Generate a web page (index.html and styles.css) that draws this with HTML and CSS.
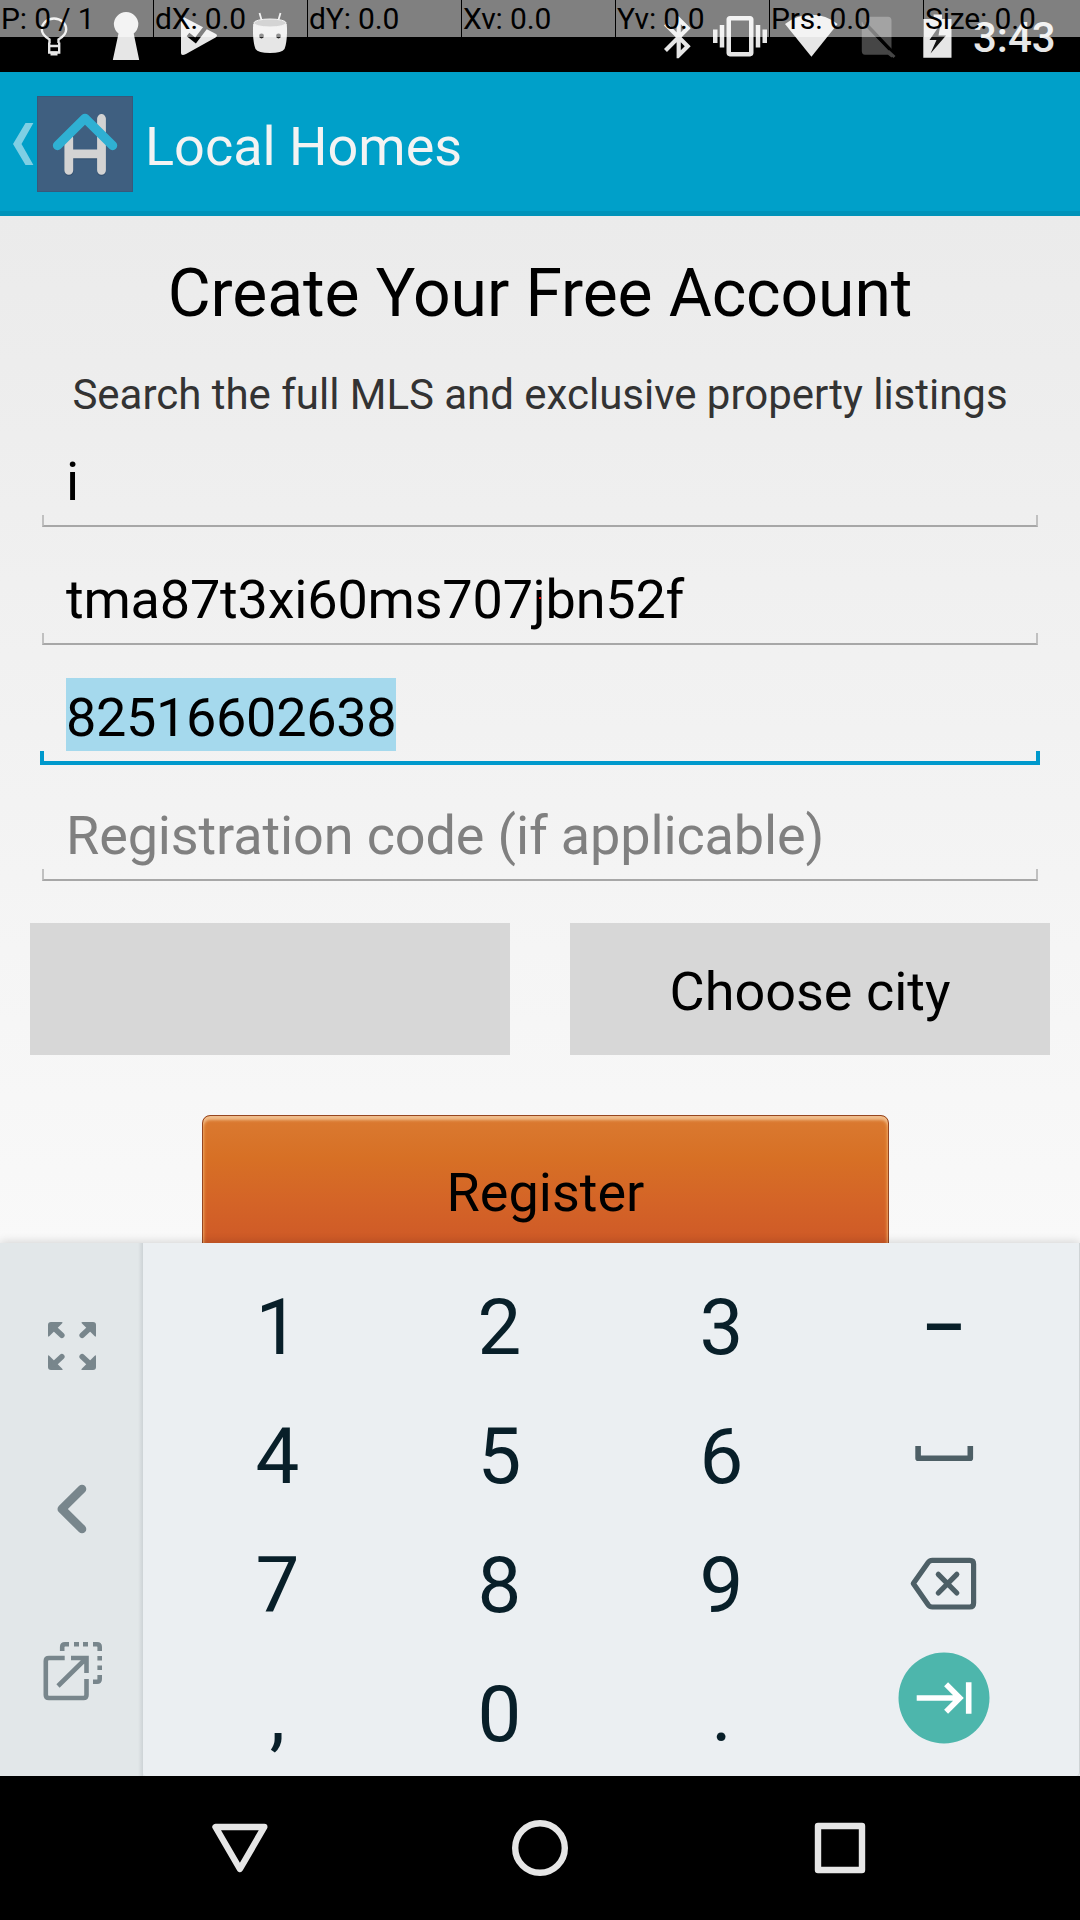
FILE: index.html
```html
<!DOCTYPE html>
<html lang="en">
<head>
<meta charset="utf-8">
<title>Local Homes</title>
<link rel="stylesheet" href="styles.css">
</head>
<body>
<div class="screen">
  <header class="status">
    <svg class="status-icon" width="86" height="72" viewBox="0 0 86 72" fill="none" stroke="currentColor" stroke-width="2.4">
      <path d="M49.5 43V39.500C44.500 36.500 41.800 33 41.800 29.500A12.200 11 0 0 1 66.200 29.500C66.200 33 63.500 36.500 58.500 39.500V43"/>
      <path d="M49.200 42.500V52.500H59.200V42.500M49 46H60"/>
      <path d="M50.500 53.500H57.500" stroke-width="4"/>
    </svg>
    <svg class="status-icon" width="74" height="72" viewBox="86 0 74 72" fill="currentColor">
      <path d="M118.500 33.500A12.200 12 0 1 1 133.700 33.500L139.200 60H112.800Z"/>
    </svg>
    <svg class="status-icon" width="76" height="72" viewBox="160 0 76 72" fill="currentColor">
      <path d="M181 18.500Q181.500 16 184 17.300L216 34Q218 35.500 216 37.200L186 54Q181 56.500 181 53Z"/>
      <path d="M188 34.500L195.500 40.500L208.500 23.500" fill="none" stroke="#000" stroke-width="4.200"/>
    </svg>
    <svg class="status-icon" width="74" height="72" viewBox="236 0 74 72" fill="currentColor">
      <path d="M253.200 24H286.800C287.500 35 286.500 44 284.500 49Q282 53 270 53Q258 53 255.500 49C253.500 44 252.500 35 253.200 24Z"/>
      <path d="M259.500 13L262.300 22.500M280.500 13L277.700 22.500" stroke="currentColor" stroke-width="1.800"/>
      <ellipse cx="270" cy="23" rx="16.200" ry="4" fill="#a9a9a9" stroke="currentColor" stroke-width="1"/>
      <circle cx="261.500" cy="36" r="2.400" fill="#222"/><circle cx="278.500" cy="36" r="2.400" fill="#222"/>
    </svg>
    <span class="status-space"></span>
    <svg class="status-icon" width="62" height="72" viewBox="640 0 62 72" fill="currentColor">
      <path transform="translate(653.500 12) scale(2.100)" d="M17.710 7.710L12 2h-1v7.590L6.410 5 5 6.410 10.590 12 5 17.590 6.410 19 11 14.410V22h1l5.710-5.710-4.300-4.290 4.300-4.290zM13 5.830l1.880 1.880L13 9.590V5.830zm1.880 10.460L13 18.170v-3.760l1.880 1.880z"/>
    </svg>
    <svg class="status-icon" width="74" height="72" viewBox="702 0 74 72" fill="currentColor">
      <path transform="translate(713 9.200) scale(2.250)" d="M0 15h2V9H0v6zm3 2h2V7H3v10zm19-8v6h2V9h-2zm-3 8h2V7h-2v10zM16.500 3h-9C6.670 3 6 3.670 6 4.500v15c0 .83.67 1.500 1.500 1.500h9c.83 0 1.500-.67 1.500-1.500v-15c0-.83-.67-1.500-1.500-1.500zM16 19H8V5h8v14z"/>
    </svg>
    <svg class="status-icon" width="74" height="72" viewBox="776 0 74 72" fill="currentColor">
      <path d="M811.400 56.700L785 24Q797 14.800 811.400 14.800Q826 14.800 837.600 24Z"/>
    </svg>
    <svg class="status-icon" width="58" height="72" viewBox="850 0 58 72" fill="#464646">
      <path d="M870 16.700H888Q891.500 16.700 891.500 20.500V49L861.800 21.500V24Z"/>
      <path d="M861.800 22.500L893.500 55.500L891.500 57.500L888 54.700H865Q861.800 54.700 861.800 51Z"/>
      <path d="M862 19.500L894 53.500" stroke="#000" stroke-width="3"/>
      <path d="M888 51L894.500 57" stroke="#464646" stroke-width="3"/>
    </svg>
    <svg class="status-icon" width="66" height="72" viewBox="908 0 66 72" fill="currentColor">
      <path d="M933.600 14.500H942V19H951.500V57.700H923.300V19H933.600Z"/>
      <path d="M940.500 24L929.500 40H936.500L930.500 53.500L946 35.500H938.500Z" fill="#111"/>
    </svg>
    <span class="clock">3:43</span>
    <div class="pointer-bar">
      <span>P: 0 / 1</span><span>dX: 0.0</span><span>dY: 0.0</span><span>Xv: 0.0</span><span>Yv: 0.0</span><span>Prs: 0.0</span><span>Size: 0.0</span>
    </div>
  </header>

  <nav class="action-bar">
    <svg width="37" height="96" viewBox="0 96 37 96"><path d="M33.400 123H25.500L13 144L25.500 165H33.400L21.500 144Z" fill="#7fcfe4"/></svg>
    <svg class="logo" width="96" height="96" viewBox="37 96 96 96" fill="none" stroke-linecap="round" stroke-linejoin="round">
      <g stroke="#2e4a68" stroke-opacity=".6" stroke-width="9"><path d="M69 138V171.500M101.500 118.500V171.500M69 155H101"/></g>
      <g stroke="#d3d3d3" stroke-width="8.800"><path d="M68.800 138V170.300M101.500 118.500V170.300M69 153.800H101"/></g>
      <path d="M57.500 145.500L85 118.300L112.600 145.500" stroke="#2fb0d3" stroke-width="9.300"/>
    </svg>
    <span class="app-title">Local Homes</span>
  </nav>

  <main class="form">
    <h1>Create Your Free Account</h1>
    <p class="subtitle">Search the full MLS and exclusive property listings</p>
    <div class="field"><span class="value">i</span><span class="rule"></span></div>
    <div class="field"><span class="value">tma87t3xi60ms707jbn52f</span><span class="rule"></span><i class="touch-dot"></i></div>
    <div class="field focused"><span class="value number">82516602638</span><span class="rule"></span></div>
    <div class="field"><span class="value hint">Registration code (if applicable)</span><span class="rule"></span></div>
    <div class="choices">
      <div class="choice"></div>
      <div class="choice">Choose city</div>
    </div>
    <div class="register">Register</div>
  </main>

  <section class="keyboard">
    <div class="side">
      <svg width="48" height="48" viewBox="-24 -24 48 48" fill="#78868c">
        <g id="corner"><path d="M-24 -21Q-24 -24 -21 -24H-10.500Q-8.500 -24 -10 -22.500L-22.500 -10Q-24 -8.500 -24 -10.500Z"/><path d="M-18 -18L-10.200 -10.700" stroke="#78868c" stroke-width="5.600" stroke-linecap="round"/></g>
        <use href="#corner" transform="scale(-1 1)"/><use href="#corner" transform="scale(1 -1)"/><use href="#corner" transform="scale(-1 -1)"/>
      </svg>
      <svg width="30" height="50" viewBox="57 1481 30 50" overflow="visible" fill="none" stroke="#78868c" stroke-width="8.600" stroke-linecap="round" stroke-linejoin="round"><path d="M82 1489L61.800 1509L82 1529"/></svg>
      <svg width="60" height="60" viewBox="42 1641 60 60" overflow="visible" fill="none" stroke="#78868c" stroke-width="4.600">
        <path d="M64.700 1658H49Q45.800 1658 45.800 1661V1695Q45.800 1698 49 1698H83.500Q86.500 1698 86.500 1695V1679"/>
        <path d="M71 1658H86.500V1673M86 1658.500L58 1686"/>
        <path d="M62.200 1651V1647Q62.200 1644.300 65 1644.300H69M74 1644.300H79M83 1644.300H88M93 1644.300H97Q99.700 1644.300 99.700 1647V1651M99.700 1656V1660.500M99.700 1665.500V1670M99.700 1675V1679Q99.700 1681.800 97 1681.800H93"/>
      </svg>
    </div>
    <div class="keys">
      <span>1</span><span>2</span><span>3</span><span class="dash">–</span>
      <span>4</span><span>5</span><span>6</span>
      <svg width="90" height="129" viewBox="898.700 1389 90 129" fill="none" stroke="#4d5f66" stroke-width="5.600" stroke-linejoin="round"><path d="M917.800 1446V1458.300H970V1446"/></svg>
      <span>7</span><span>8</span><span>9</span>
      <svg width="90" height="129" viewBox="898.700 1518 90 129" fill="none" stroke="#4d5f66" stroke-width="5.200" stroke-linejoin="round"><path d="M932 1560.300H969.500Q973.300 1560.300 973.300 1564V1603Q973.300 1607 969.500 1607H932Q929.500 1607 928 1605L913 1583.600L928 1562.300Q929.500 1560.300 932 1560.300Z"/><path d="M938 1574.300L956.500 1593M956.500 1574.300L938 1593" stroke-linecap="round"/></svg>
      <span>,</span><span>0</span><span>.</span>
      <svg width="92" height="129" viewBox="897.700 1647 92 129"><circle cx="943.700" cy="1698" r="45.500" fill="#4db6ac"/><path d="M916.400 1698H959M945.800 1684.300L959.500 1698L945.800 1711.700M968.400 1682.300V1713.700" fill="none" stroke="#fff" stroke-width="5.600"/></svg>
    </div>
  </section>

  <footer class="nav">
    <svg width="56" height="56" viewBox="212 1820 56 56"><path d="M215.500 1827H264.300L239.900 1869Z"/></svg>
    <svg width="56" height="56" viewBox="512 1820 56 56"><circle cx="540" cy="1848" r="24.800"/></svg>
    <svg width="56" height="56" viewBox="812 1820 56 56"><path d="M818 1826H862V1870H818Z"/></svg>
  </footer>
</div>
</body>
</html>
```
FILE: styles.css
```css
* { box-sizing: border-box; }
body { margin: 0; background: #000; font-family: Roboto, "Liberation Sans", sans-serif; }
.screen { width: 1080px; height: 1920px; display: flex; flex-direction: column; overflow: hidden; }
svg { display: block; flex: none; }

/* Status bar with the pointer-location readout on top */
.status { position: relative; height: 72px; flex: none; display: flex; background: #000; color: #e6e6e6; }
.status-space { flex: 0 0 330px; }
.clock { font-size: 42px; font-weight: 500; line-height: 75px; height: 72px; margin-left: -1px; white-space: nowrap; }
.pointer-bar { position: absolute; top: 0; left: 0; width: 1080px; height: 37px; display: grid; grid-template-columns: repeat(6, 153px) 1fr; column-gap: 1px; color: #000; font-size: 30px; line-height: 37px; letter-spacing: -.15px; }
.pointer-bar span { background: rgba(255, 255, 255, .5); padding-left: 1px; white-space: nowrap; }

.action-bar { height: 144px; flex: none; display: flex; align-items: center; background: #00a0c9; box-shadow: inset 0 -5px #0093b9; }
.logo { background: #3f5f80; box-shadow: inset 0 0 0 1px #38587a; }
.app-title { margin-left: 12px; padding-top: 5px; font-size: 54px; color: #f3f3f3; }

.form { height: 1027px; flex: none; overflow: hidden; background: linear-gradient(#ebebeb, #f9f9f9); color: #000; }
h1 { margin: 0; font-size: 66px; font-weight: 400; line-height: 155px; letter-spacing: -.1px; text-align: center; }
.subtitle { margin: 0; font-size: 42px; line-height: 48px; letter-spacing: -.02px; text-align: center; color: #333; white-space: nowrap; }

.field { position: relative; height: 108px; margin-bottom: 10px; padding: 23px 42px 0; }
.value { display: block; width: max-content; height: 73px; margin-left: 24px; font-size: 54px; line-height: 79px; letter-spacing: -.2px; white-space: pre; }
.rule { display: block; height: 12px; border: 2px solid #c0c0c0; border-top: 0; border-bottom-color: #a7a7a7; }
.number { letter-spacing: -.33px; }
.hint { color: #808080; letter-spacing: -.13px; }
.focused .value { background: #a5d9ed; }
.focused .rule { height: 14px; margin: 0 -2px; border-width: 0 4px 4px; border-color: #0099cc; }
.touch-dot { position: absolute; left: 539px; top: 60px; width: 2px; height: 2px; background: #f00; }

.choices { display: grid; grid-template-columns: 1fr 1fr; gap: 60px; padding: 32px 30px 0; }
.choice { height: 132px; background: #d7d7d7; font-size: 54px; line-height: 137px; text-align: center; }
.register { width: 687px; height: 160px; margin: 60px 0 0 202px; border: 1px solid #964620; border-radius: 8px; background: linear-gradient(#da7a31, #d77025 42px, #d46427 85px, #cf5a27 125px); box-shadow: inset 0 4px 3px #f0bd8c, inset 0 0 4px #f09a40; font-size: 54px; line-height: 153px; text-align: center; }

.keyboard { position: relative; height: 533px; flex: none; display: flex; background: #e2e7e9; box-shadow: 0 -1px 9px rgba(0, 0, 0, .16); }
.side { width: 143px; display: flex; flex-direction: column; align-items: center; justify-content: space-between; padding: 79px 0 75px; background: linear-gradient(90deg, #e2e7e9 138px, #cdd3d6 143px); }
.keys { flex: 1; display: grid; grid-template-columns: repeat(4, 222px); grid-template-rows: repeat(4, 129px); justify-content: center; padding-top: 17px; padding-right: 1px; background: #ebeff2; border-right: 1px solid #cfd4d6; border-radius: 0 0 4px 4px; color: #081f29; font-size: 78px; line-height: 136px; text-align: center; justify-items: center; }
.dash { font-size: 68px; font-weight: 500; }

.nav { height: 144px; flex: none; display: flex; align-items: center; justify-content: space-between; padding: 0 212px; background: #000; fill: none; stroke: #e6e6e6; stroke-width: 6.4; stroke-linejoin: round; }
```
